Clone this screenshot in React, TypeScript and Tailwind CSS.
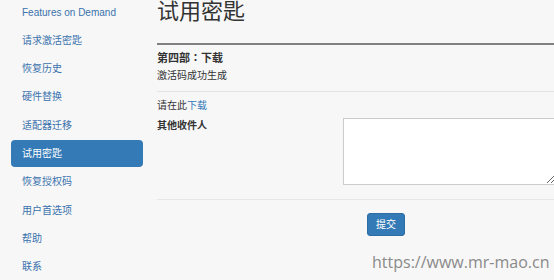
import React from "react";

const navItems = [
    "Features on Demand",
    "请求激活密匙",
    "恢复历史",
    "硬件替换",
    "适配器迁移",
    "试用密匙",
    "恢复授权码",
    "用户首选项",
    "帮助",
    "联系",
];

export default function App() {
    return (
        <div
            className="relative w-[554px] h-[280px] overflow-hidden bg-[#f7f7f7] flex text-[#333]"
            style={{ fontFamily: '"Liberation Sans", "Noto Sans CJK SC", sans-serif' }}
        >
            {/* Sidebar */}
            <nav className="w-[157px] shrink-0 pl-[11px] pr-[14px] mt-[-1.5px] flex flex-col gap-[1.33px]">
                {navItems.map((item) => (
                    <div
                        key={item}
                        className={
                            item === "试用密匙"
                                ? "h-[27px] shrink-0 flex items-center pl-[11px] rounded-[4px] bg-[#337ab7] text-white text-[10px]"
                                : "h-[27px] shrink-0 flex items-center pl-[11px] rounded-[4px] text-[#3a72ad] text-[10px]"
                        }
                    >
                        {item}
                    </div>
                ))}
            </nav>

            {/* Content */}
            <main className="flex-1 min-w-0 flex flex-col">
                <h1 className="h-[24px] leading-[24px] text-[22px] font-normal text-[#333]">试用密匙</h1>
                <div className="mt-[19px] h-[2px] bg-[#808080]" />

                <h3 className="mt-[5px] text-[11px] leading-[14px] font-bold">
                    第四部<span style={{ fontFamily: '"Noto Sans CJK TC", sans-serif' }}>：</span>下载
                </h3>
                <p className="mt-[4px] text-[10px] leading-[14px]">激活码成功生成</p>
                <div className="mt-[8px] h-px bg-[#e3e3e3]" />

                <p className="mt-[7px] text-[10px] leading-[14px]">
                    请在此<span className="text-[#337ab7]">下载</span>
                </p>

                <div className="mt-[5px] flex">
                    <label className="w-[186px] shrink-0 pt-[1px] text-[10px] leading-[14px] font-bold">其他收件人</label>
                    <textarea className="w-[213px] h-[67px] shrink-0 bg-white border border-[#cccccc] outline-none" />
                </div>

                <div className="mt-[14px] h-px bg-[#e6e6e6]" />

                <div className="mt-[13px] pl-[210px]">
                    <button className="w-[38px] h-[23px] rounded-[3px] bg-[#337ab7] text-white text-[10px] flex items-center justify-center border border-[#2e6da4]">
                        提交
                    </button>
                </div>
            </main>

            {/* Watermark */}
            <div
                className="absolute left-[372px] top-[250px] text-[16px] leading-[24px] text-[#8a8a8a]"
                style={{ fontFamily: '"Open Sans", sans-serif' }}
            >
                https://www.mr-mao.cn
            </div>
        </div>
    );
}
